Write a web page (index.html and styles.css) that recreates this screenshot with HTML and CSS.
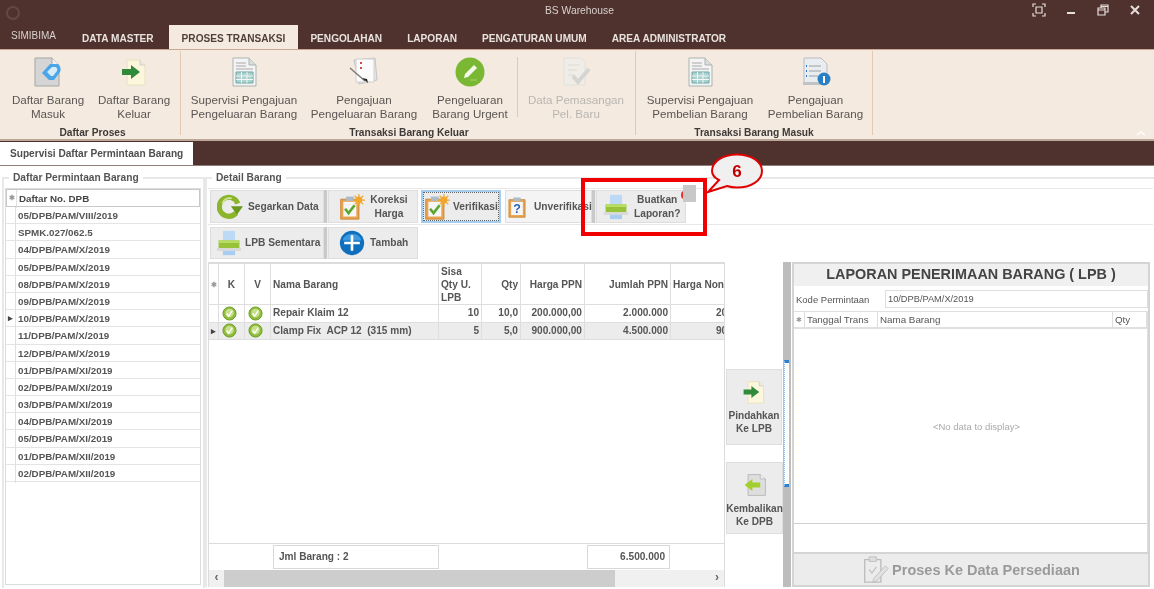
FILE: index.html
```html
<!DOCTYPE html>
<html>
<head>
    <meta charset="utf-8">
    <title>BS Warehouse</title>
    <link rel="stylesheet" href="styles.css">
</head>
<body>

<!-- gambar ikon, dipakai ulang dengan <use> -->
<svg class="defs" width="0" height="0">
    <symbol id="i-doc-blue" viewBox="0 0 30 30">
        <path d="M2 1h17l7 7v21H2z" fill="#d5d5d5" stroke="#a5a5a5"/>
        <path d="M19 1v7h7" fill="#f2f2f2" stroke="#a5a5a5"/>
        <path d="M9 16l8-9 8 0q4 4 2 8l-6 8h-5z" fill="#4aa6e8"/>
        <path d="M14 15l5-5h4q2 2 1 4l-4 5h-2z" fill="#d7ecfb"/>
    </symbol>
    <symbol id="i-doc-right" viewBox="0 0 30 30">
        <path d="M8 3h13l5 5v20H8z" fill="#fbf6dc" stroke="#e8e2c0"/>
        <path d="M21 3v5h5" fill="#e9e9e0" stroke="#cfcfc4"/>
        <path d="M3 12h9V8l9 7-9 7v-4H3z" fill="#2f8a3c"/>
    </symbol>
    <symbol id="i-doc-left" viewBox="0 0 30 30">
        <path d="M7 3h14l6 5v19H7z" fill="#dedede" stroke="#b5b5b5"/>
        <path d="M21 3v5h6" fill="#f2f2f2" stroke="#b5b5b5"/>
        <path d="M21 12h-9V8l-9 7 9 7v-4h9z" fill="#a3cf2d"/>
    </symbol>
    <symbol id="i-sheet" viewBox="0 0 30 30">
        <path d="M4 1h16l7 7v21H4z" fill="#f4f4f4" stroke="#a9b4b4"/>
        <path d="M20 1v7h7" fill="#dcdcdc" stroke="#a9b4b4"/>
        <path d="M7 6h10M7 9h10M7 12h17" stroke="#a8a8a8"/>
        <path d="M7 15h17v11H7z" fill="#a9d3cf" stroke="#6fa5a5"/>
        <path d="M7 19h17M7 22.500h17M12.500 15v11M18 15v11" stroke="#f4f4f4"/>
    </symbol>
    <symbol id="i-notes" viewBox="0 0 30 30">
        <path d="M5 3l21-2 2 22-18 4z" fill="#e4e4e4" stroke="#c5c5c5"/>
        <path d="M7 2h18v23H7z" fill="#fbfbfb" stroke="#d0d0d0"/>
        <path d="M1 11l15 13" stroke="#7c7c7c" stroke-width="1.500"/>
        <path d="M13 21l6 5-1-4z" fill="#222"/>
        <path d="M11 6h2M11 11h2" stroke="#d04a4a" stroke-width="2"/>
    </symbol>
    <symbol id="i-pencil-ok" viewBox="0 0 30 30">
        <circle cx="15" cy="15" r="14.500" fill="#7ab834"/>
        <path d="M9 21l1-4 9-9 3 3-9 9z" fill="#f4f8ea"/>
        <path d="M15 23h7" stroke="#a7d36d"/>
    </symbol>
    <symbol id="i-doc-check" viewBox="0 0 30 30">
        <path d="M3 1h17l4 4v23H3z" fill="#f0ede8" stroke="#e3e0da"/>
        <path d="M7 8h12M7 13h9M7 18h6" stroke="#dedbd5"/>
        <path d="M12 19l5 6 11-13" fill="none" stroke="#d5d4d0" stroke-width="4"/>
    </symbol>
    <symbol id="i-doc-info" viewBox="0 0 30 30">
        <path d="M3 1h17l6 6v20H3z" fill="#e9edf0" stroke="#b8bcc0"/>
        <path d="M8 9h12M8 14h12M8 19h9" stroke="#9aa0a5"/>
        <path d="M5 9h1M5 14h1M5 19h1" stroke="#2d78c8" stroke-width="2"/>
        <path d="M2 25h18v3H2z" fill="#bfc3c5"/>
        <circle cx="23" cy="22" r="6.500" fill="#2b80c5"/>
        <path d="M23 19v7" stroke="#fff" stroke-width="2"/>
    </symbol>
    <symbol id="i-refresh" viewBox="0 0 30 30">
        <path d="M22 22A11 11 0 1 1 24 11" fill="none" stroke="#8cb52c" stroke-width="6"/>
        <path d="M6 11a9 9 0 0 1 11-6" fill="none" stroke="#cfe59a" stroke-width="2"/>
        <path d="M16 14h14l-7 10z" fill="#699a1e"/>
    </symbol>
    <symbol id="i-clip-star" viewBox="0 0 30 30">
        <path d="M2 6h21v23H2z" fill="#e9a34e" stroke="#c67f2c"/>
        <path d="M5 9h15v17H5z" fill="#f6f6f6"/>
        <path d="M8 3h9v5H8z" fill="#aebac8"/>
        <path d="M7 17l4 5 7-9" fill="none" stroke="#5aa82f" stroke-width="3"/>
        <circle cx="23" cy="7" r="4" fill="#f0a72d"/>
        <path d="M23 0v14M16 7h14M18 2l10 10M28 2L18 12" stroke="#f0a72d" stroke-width="1.400"/>
    </symbol>
    <symbol id="i-clip-help" viewBox="0 0 30 30">
        <path d="M4 5h22v24H4z" fill="#e9a34e" stroke="#c67f2c"/>
        <path d="M7 8h16v18H7z" fill="#f6f6f6"/>
        <path d="M10 2h10v5H10z" fill="#aebac8"/>
        <text class="help-mark" x="15" y="23" text-anchor="middle">?</text>
    </symbol>
    <symbol id="i-printer" viewBox="0 0 30 30">
        <path d="M8 1h14v11H8z" fill="#bcd9f5"/>
        <path d="M3 12h24v9H3z" fill="#97c23a"/>
        <path d="M3 12h24v3H3z" fill="#b9dc63"/>
        <path d="M1 21h28v3H1z" fill="#d8d8d8"/>
        <path d="M8 24h14v5H8z" fill="#a8cdf2"/>
    </symbol>
    <symbol id="i-plus" viewBox="0 0 30 30">
        <circle cx="15" cy="15" r="14" fill="#0f6fbd"/>
        <path d="M4 12a11.500 11 0 0 1 22 0z" fill="#3c9ae0"/>
        <path d="M15 6v18M6 15h18" stroke="#fff" stroke-width="3"/>
    </symbol>
    <symbol id="i-ok" viewBox="0 0 16 16">
        <circle cx="8" cy="8" r="7" fill="#8fbd3c" stroke="#6d9a28"/>
        <circle cx="8" cy="7.500" r="4.500" fill="#c8e08e"/>
        <path d="M5 8l2 3 4-6" fill="none" stroke="#fff" stroke-width="1.500"/>
    </symbol>
    <symbol id="i-clip-gray" viewBox="0 0 30 30">
        <path d="M3 4h18v25H3z" fill="#ececec" stroke="#bdbdbd" stroke-width="1.500"/>
        <path d="M8 1h8v5H8z" fill="#dedede" stroke="#bdbdbd"/>
        <path d="M8 15l3 4 5-7" fill="none" stroke="#c4c4c4" stroke-width="1.500"/>
        <path d="M13 25l13-14 3 3-13 14-4 1z" fill="#e2e2e2" stroke="#bdbdbd"/>
    </symbol>
</svg>

<div class="app">
    <div class="titlebar">
        <span class="app-logo"></span>
        <span class="app-title">BS Warehouse</span>
        <div class="win-btns">
            <svg viewBox="0 0 14 14"><path d="M1 4V1h3M10 1h3v3M13 10v3h-3M4 13H1v-3M4 4h6v6H4z"/></svg>
            <svg viewBox="0 0 14 14"><path class="thick" d="M3 10h8"/></svg>
            <svg viewBox="0 0 14 14"><path d="M2 5h7v7H2zM5 5V2h7v7H9M2 7h7M5 3.500h7"/></svg>
            <svg viewBox="0 0 14 14"><path class="thick" d="M3 3l8 8M11 3l-8 8"/></svg>
        </div>
    </div>

    <div class="menubar">
        <span class="menu first">SIMIBIMA</span>
        <span class="menu">DATA MASTER</span>
        <span class="menu active">PROSES TRANSAKSI</span>
        <span class="menu">PENGOLAHAN</span>
        <span class="menu">LAPORAN</span>
        <span class="menu">PENGATURAN UMUM</span>
        <span class="menu">AREA ADMINISTRATOR</span>
    </div>

    <div class="ribbon">
        <div class="rgroup g-proses">
            <div class="ritems">
                <div class="ritem w86"><svg><use href="#i-doc-blue"/></svg><span>Daftar Barang<br>Masuk</span></div>
                <div class="ritem w86"><svg><use href="#i-doc-right"/></svg><span>Daftar Barang<br>Keluar</span></div>
            </div>
            <div class="rlabel">Daftar Proses</div>
        </div>
        <div class="rgroup g-keluar">
            <div class="ritems">
                <div class="ritem w122"><svg><use href="#i-sheet"/></svg><span>Supervisi Pengajuan<br>Pengeluaran Barang</span></div>
                <div class="ritem w118"><svg><use href="#i-notes"/></svg><span>Pengajuan<br>Pengeluaran Barang</span></div>
                <div class="ritem w94"><svg><use href="#i-pencil-ok"/></svg><span>Pengeluaran<br>Barang Urgent</span></div>
                <div class="rsep"></div>
                <div class="ritem w116 disabled"><svg><use href="#i-doc-check"/></svg><span>Data Pemasangan<br>Pel. Baru</span></div>
            </div>
            <div class="rlabel">Transaksi Barang Keluar</div>
        </div>
        <div class="rgroup g-masuk">
            <div class="ritems">
                <div class="ritem w128"><svg><use href="#i-sheet"/></svg><span>Supervisi Pengajuan<br>Pembelian Barang</span></div>
                <div class="ritem w103"><svg><use href="#i-doc-info"/></svg><span>Pengajuan<br>Pembelian Barang</span></div>
            </div>
            <div class="rlabel">Transaksi Barang Masuk</div>
        </div>
        <svg class="collapse" viewBox="0 0 10 6"><path d="M1 5l4-3 4 3"/></svg>
    </div>

    <div class="tabstrip">
        <div class="doc-tab">Supervisi Daftar Permintaan Barang</div>
    </div>

    <div class="main">
        <fieldset class="group left">
            <legend>Daftar Permintaan Barang</legend>
            <div class="dpb">
                <div class="dpb-row head"><span class="ind">&#10033;</span><span>Daftar No. DPB</span></div>
                <div class="dpb-row"><span class="ind"></span><span>05/DPB/PAM/VIII/2019</span></div>
                <div class="dpb-row"><span class="ind"></span><span>SPMK.027/062.5</span></div>
                <div class="dpb-row"><span class="ind"></span><span>04/DPB/PAM/X/2019</span></div>
                <div class="dpb-row"><span class="ind"></span><span>05/DPB/PAM/X/2019</span></div>
                <div class="dpb-row"><span class="ind"></span><span>08/DPB/PAM/X/2019</span></div>
                <div class="dpb-row"><span class="ind"></span><span>09/DPB/PAM/X/2019</span></div>
                <div class="dpb-row"><span class="ind mark">&#9656;</span><span>10/DPB/PAM/X/2019</span></div>
                <div class="dpb-row"><span class="ind"></span><span>11/DPB/PAM/X/2019</span></div>
                <div class="dpb-row"><span class="ind"></span><span>12/DPB/PAM/X/2019</span></div>
                <div class="dpb-row"><span class="ind"></span><span>01/DPB/PAM/XI/2019</span></div>
                <div class="dpb-row"><span class="ind"></span><span>02/DPB/PAM/XI/2019</span></div>
                <div class="dpb-row"><span class="ind"></span><span>03/DPB/PAM/XI/2019</span></div>
                <div class="dpb-row"><span class="ind"></span><span>04/DPB/PAM/XI/2019</span></div>
                <div class="dpb-row"><span class="ind"></span><span>05/DPB/PAM/XI/2019</span></div>
                <div class="dpb-row"><span class="ind"></span><span>01/DPB/PAM/XII/2019</span></div>
                <div class="dpb-row"><span class="ind"></span><span>02/DPB/PAM/XII/2019</span></div>
            </div>
        </fieldset>

        <fieldset class="group detail">
            <legend>Detail Barang</legend>

            <div class="toolbar first-bar">
                <div class="btn w114"><svg><use href="#i-refresh"/></svg><span>Segarkan Data</span></div>
                <div class="grip"></div>
                <div class="btn w90 wide"><svg><use href="#i-clip-star"/></svg><span class="center">Koreksi<br>Harga</span></div>
                <div class="btn w80 focus"><svg><use href="#i-clip-star"/></svg><span>Verifikasi</span></div>
                <div class="btn w87 plain"><svg><use href="#i-clip-help"/></svg><span>Unverifikasi</span></div>
                <div class="grip"></div>
                <div class="btn w90 report-make"><svg><use href="#i-printer"/></svg><span class="center">Buatkan<br>Laporan?</span></div>
            </div>
            <div class="toolbar second-bar">
                <div class="btn w114 tight"><svg><use href="#i-printer"/></svg><span>LPB Sementara</span></div>
                <div class="grip"></div>
                <div class="btn w90 wide"><svg><use href="#i-plus"/></svg><span>Tambah</span></div>
            </div>

            <div class="workarea">
                <div class="items">
                    <div class="cols items-head">
                        <span class="cell c star">&#10033;</span>
                        <span class="cell c">K</span>
                        <span class="cell c">V</span>
                        <span class="cell">Nama Barang</span>
                        <span class="cell">Sisa<br>Qty U.<br>LPB</span>
                        <span class="cell r">Qty</span>
                        <span class="cell r">Harga PPN</span>
                        <span class="cell r">Jumlah PPN</span>
                        <span class="cell clip">Harga Non</span>
                    </div>
                    <div class="cols items-row">
                        <span class="cell"></span>
                        <span class="cell c"><svg class="ok"><use href="#i-ok"/></svg></span>
                        <span class="cell c"><svg class="ok"><use href="#i-ok"/></svg></span>
                        <span class="cell">Repair Klaim 12</span>
                        <span class="cell r">10</span>
                        <span class="cell r">10,0</span>
                        <span class="cell r">200.000,00</span>
                        <span class="cell r">2.000.000</span>
                        <span class="cell clip r-clip">200.000,00</span>
                    </div>
                    <div class="cols items-row sel">
                        <span class="cell c mark">&#9656;</span>
                        <span class="cell c"><svg class="ok"><use href="#i-ok"/></svg></span>
                        <span class="cell c"><svg class="ok"><use href="#i-ok"/></svg></span>
                        <span class="cell">Clamp Fix&nbsp; ACP 12&nbsp; (315 mm)</span>
                        <span class="cell r">5</span>
                        <span class="cell r">5,0</span>
                        <span class="cell r">900.000,00</span>
                        <span class="cell r">4.500.000</span>
                        <span class="cell clip r-clip">900.000,00</span>
                    </div>
                    <div class="items-fill"></div>
                    <div class="cols items-foot">
                        <span class="foot-box jml">Jml Barang : 2</span>
                        <span class="foot-box total">6.500.000</span>
                    </div>
                    <div class="hscroll">
                        <span class="arrow">&#8249;</span>
                        <span class="thumb"></span>
                        <span class="arrow">&#8250;</span>
                    </div>
                </div>

                <div class="movers">
                    <div class="mover m-in"><svg><use href="#i-doc-right"/></svg><span>Pindahkan<br>Ke LPB</span></div>
                    <div class="mover m-out"><svg><use href="#i-doc-left"/></svg><span>Kembalikan<br>Ke DPB</span></div>
                </div>

                <div class="splitter"><div class="split-grip"></div></div>

                <div class="report">
                    <div class="report-title">LAPORAN PENERIMAAN BARANG ( LPB )</div>
                    <div class="report-code">
                        <span>Kode Permintaan</span>
                        <span class="code-box">10/DPB/PAM/X/2019</span>
                    </div>
                    <div class="report-grid">
                        <div class="report-head">
                            <span class="c star">&#10033;</span>
                            <span>Tanggal Trans</span>
                            <span>Nama Barang</span>
                            <span>Qty</span>
                        </div>
                        <div class="no-data">&lt;No data to display&gt;</div>
                        <div class="report-foot"></div>
                    </div>
                    <div class="report-btn"><svg><use href="#i-clip-gray"/></svg><span>Proses Ke Data Persediaan</span></div>
                </div>
            </div>
        </fieldset>
    </div>

    <!-- tanda anotasi di atas tangkapan layar -->
    <div class="note-box"></div>
    <div class="note-dot"></div>
    <div class="note-patch"></div>
    <svg class="note-bubble" viewBox="0 0 64 50">
        <path d="M31 2.500c14 0 25 7 25 16.500S45 35.500 31 35.500c-4 0-7-.5-10-1.500L2 40l11-12C9 26 6 23 6 19 6 9.500 17 2.500 31 2.500z" fill="#f0f0f0" stroke="#e00000" stroke-width="2"/>
        <text x="31" y="25" text-anchor="middle">6</text>
    </svg>
</div>

</body>
</html>
```

FILE: styles.css
```css
* {
    box-sizing: border-box;
}
html, body {
    margin: 0;
    height: 100%;
    overflow: hidden;
    background: #fff;
}
body {
    font-family: "Liberation Sans", Arial, sans-serif;
    font-size: 11px;
    color: #4a4a4a;
}
.defs {
    position: absolute;
}
.app {
    position: relative;
    width: 1154px;
    height: 589px;
    display: grid;
    grid-template-rows: 25px 24px 92px 25px 1fr;
    filter: blur(0.45px);
}

/* title bar */
.titlebar {
    background: #4f322e;
    display: flex;
    align-items: center;
    position: relative;
}
.app-logo {
    width: 14px;
    height: 14px;
    margin-left: 6px;
    border-radius: 50%;
    border: 2px solid #664840;
}
.app-title {
    position: absolute;
    left: 545px;
    top: 5px;
    color: #d9d2cf;
    font-size: 10.300px;
}
.win-btns {
    margin-left: auto;
    margin-right: 12px;
    display: flex;
    gap: 18px;
    margin-top: -5px;
}
.win-btns svg {
    width: 14px;
    height: 14px;
    fill: none;
    stroke: #e6dedb;
    stroke-width: 1.2;
}
.win-btns .thick {
    stroke-width: 2;
}

/* menu */
.menubar {
    background: #4f322e;
    display: flex;
    align-items: stretch;
}
.menu {
    padding: 2px 12.500px 0;
    display: flex;
    align-items: center;
    color: #e8e2de;
    font-weight: bold;
    font-size: 10.100px;
}
.menu.first {
    padding: 0 13.500px 3px 11px;
    font-weight: normal;
    font-size: 10px;
    color: #d8d2cf;
}
.menu.active {
    margin-left: 3px;
    background: #f5eadf;
    color: #4f3f3a;
}

/* ribbon */
.ribbon {
    background: #f5eadf;
    border-top: 1px solid #c9a893;
    border-bottom: 2px solid #bda797;
    display: flex;
    position: relative;
}
.rgroup {
    display: flex;
    flex-direction: column;
    border-right: 1px solid #e2c9b4;
    margin-top: 1px;
    margin-bottom: 4px;
}
.g-proses {
    width: 181px;
    padding-left: 5px;
}
.g-keluar {
    width: 455px;
    padding-left: 2px;
}
.g-masuk {
    width: 237px;
}
.ritems {
    display: flex;
    flex: 1;
}
.ritem {
    display: flex;
    flex-direction: column;
    align-items: center;
    text-align: center;
    padding-top: 6px;
    font-size: 11.600px;
    line-height: 14px;
    color: #5a5553;
    white-space: nowrap;
}
.ritem svg {
    width: 30px;
    height: 30px;
    margin-bottom: 6px;
}
.ritem.disabled {
    color: #b9b6b2;
}
.w86 { width: 86px; }
.w94 { width: 94px; }
.w103 { width: 103px; }
.w116 { width: 116px; }
.w118 { width: 118px; }
.w122 { width: 122px; }
.w128 { width: 128px; }
.rsep {
    width: 1px;
    height: 60px;
    margin-top: 6px;
    background: #e2c9b4;
}
.rlabel {
    text-align: center;
    font-weight: bold;
    font-size: 10.200px;
    line-height: 13px;
    color: #3e3a38;
    margin-bottom: -4px;
}
.collapse {
    position: absolute;
    right: 8px;
    bottom: 3px;
    width: 10px;
    height: 6px;
    fill: none;
    stroke: #fff;
    stroke-width: 1.5;
}

/* tab bar */
.tabstrip {
    background: #4f322e;
    border-bottom: 1px solid #8f7f7a;
    display: flex;
}
.doc-tab {
    width: 193px;
    margin-top: 1px;
    background: #fff;
    padding-left: 10px;
    font-weight: bold;
    font-size: 10.150px;
    line-height: 24px;
    white-space: nowrap;
    color: #4f4f4f;
}

/* main area */
.main {
    display: grid;
    grid-template-columns: 205px 1fr;
    min-height: 0;
}
.group {
    margin: 6px 0 1px;
    padding: 0;
    border: 0;
    border-top: 2px solid #e8e8e8;
    min-width: 0;
    min-height: 0;
}
.group legend {
    margin-left: 4px;
    padding: 0 4px;
    font-weight: bold;
    font-size: 10.200px;
    color: #555;
    line-height: 12px;
}
.left {
    margin-left: 2px;
    border-left: 2px solid #e8e8e8;
    border-right: 2px solid #e8e8e8;
    padding: 4px 0 0 1px;
}
.detail {
    margin-bottom: 2px;
    padding-left: 1px;
    border-left: 2px solid #e8e8e8;
    display: flex;
    flex-direction: column;
}

/* list DPB */
.dpb {
    width: 196px;
    height: 397px;
    border: 1px solid #dcdcdc;
    font-weight: bold;
    font-size: 9.800px;
}
.dpb-row {
    display: grid;
    grid-template-columns: 10px 1fr;
    height: 17.200px;
    line-height: 18px;
    border-bottom: 1px solid #e4e4e4;
    color: #555;
    white-space: nowrap;
}
.dpb-row span:last-child {
    padding-left: 2px;
}
.dpb-row.head {
    height: 18px;
    border: 1px solid #c8c8c8;
    color: #444;
}
.ind {
    border-right: 1px solid #e0e0e0;
    text-align: center;
    color: #999;
    font-size: 7px;
    line-height: 16px;
}
.mark {
    color: #444;
    font-size: 9px;
}
.star {
    color: #999;
    font-size: 7px;
}

/* toolbar */
.toolbar {
    display: flex;
    align-items: stretch;
    width: 945px;
    padding-left: 2px;
}
.first-bar {
    height: 37px;
    margin-top: 4px;
    padding-top: 1px;
    padding-bottom: 1px;
    border-top: 1px solid #e8e8e8;
    border-bottom: 1px solid #e8e8e8;
}
.second-bar {
    height: 35px;
    padding-top: 2px;
    padding-bottom: 1px;
}
.btn {
    display: flex;
    align-items: center;
    gap: 5px;
    padding-left: 6px;
    background: #ececec;
    border: 1px solid #dedede;
    font-weight: bold;
    font-size: 10.200px;
    line-height: 14px;
    color: #555;
    white-space: nowrap;
    margin-right: 3px;
}
.btn svg {
    flex: none;
    width: 26px;
    height: 26px;
}
.btn .center {
    flex: 1;
    text-align: center;
}
.btn.wide {
    padding-left: 10px;
    padding-right: 9px;
}
.btn.report-make {
    padding-right: 6px;
}
.btn.tight {
    gap: 3px;
    padding-left: 5px;
}
.btn.focus {
    border: 2px solid #a5cdf0;
    outline: 1px dotted #666;
    outline-offset: -3px;
    padding-left: 1px;
    gap: 3px;
}
.btn.plain {
    padding-left: 0;
    gap: 6px;
    margin-right: 0;
    background: #f4f4f4;
}
.btn.plain svg {
    width: 22px;
}
.w114 { width: 114px; margin-right: 0; }
.w90 { width: 90px; }
.w80 { width: 80px; margin-right: 4px; }
.w87 { width: 87px; }
.grip {
    width: 4px;
    background: #c9c9c9;
    border-right: 1px solid #eee;
}

/* tabel barang */
.workarea {
    flex: 1;
    min-height: 0;
    display: grid;
    grid-template-columns: 517px 58px 8px 1fr;
    padding-top: 2px;
}
.items {
    display: flex;
    flex-direction: column;
    border-left: 1px solid #dcdcdc;
    min-height: 0;
    border-right: 1px solid #dcdcdc;
}
.cols {
    display: grid;
    grid-template-columns: 10px 26px 26px 168px 43px 39px 64px 86px 1fr;
    font-weight: bold;
    font-size: 10.100px;
    color: #555;
}
.cell {
    padding: 0 2px;
    border-right: 1px solid #dedede;
    border-bottom: 1px solid #dedede;
    display: flex;
    flex-direction: column;
    justify-content: center;
    white-space: nowrap;
    overflow: hidden;
}
.cell.c {
    align-items: center;
    padding: 0;
}
.cell.r {
    align-items: flex-end;
}
.cell.clip {
    border-right: 0;
}
.r-clip {
    padding-left: 45px;
    padding-right: 0;
    color: #555;
}
.items-head {
    height: 43px;
    line-height: 13px;
    border-top: 2px solid #dcdcdc;
}
.items-row {
    height: 17.500px;
    line-height: 16px;
}
.items-row.sel {
    background: #ececec;
}
.ok {
    width: 15px;
    height: 15px;
    margin-right: 5px;
}
.items-fill {
    flex: 1;
}
.items-foot {
    height: 27px;
    border-top: 1px solid #dcdcdc;
    padding-top: 1px;
}
.foot-box {
    border: 1px solid #d8d8d8;
    height: 24px;
    line-height: 22px;
    padding: 0 4px;
}
.jml {
    grid-column: 4 / 5;
    margin-left: 2px;
    padding-left: 5px;
}
.total {
    grid-column: 8 / 9;
    text-align: right;
    margin-left: 2px;
    margin-right: 1px;
}
.hscroll {
    height: 17px;
    display: grid;
    grid-template-columns: 15px 391px 1fr;
    align-items: stretch;
    background: #f0f0f0;
}
.hscroll .arrow {
    text-align: center;
    font-size: 12px;
    line-height: 15px;
    font-weight: bold;
    color: #666;
}
.hscroll .arrow:last-child {
    text-align: right;
    padding-right: 5px;
}
.thumb {
    background: #cdcdcd;
}

/* tombol tengah */
.movers {
    display: flex;
    flex-direction: column;
    align-items: flex-start;
    padding-left: 1px;
    font-weight: bold;
    font-size: 10.100px;
    line-height: 12.500px;
    color: #555;
}
.mover {
    background: #ececec;
    border: 1px solid #dedede;
    display: flex;
    flex-direction: column;
    align-items: center;
    text-align: center;
    padding-top: 9px;
    white-space: nowrap;
}
.mover svg {
    width: 26px;
    height: 26px;
    margin-bottom: 5px;
}
.m-in {
    width: 56px;
    height: 76px;
    margin-top: 107px;
}
.m-out {
    width: 57px;
    height: 72px;
    margin-top: 17px;
}
.splitter {
    background: #bdbdbd;
    padding-top: 98px;
}
.split-grip {
    width: 5px;
    height: 127px;
    background: #fff;
    border-left: 1px dotted #8ab8e8;
    border-top: 3px solid #2d7fd0;
    border-bottom: 3px solid #2d7fd0;
    margin-left: 1px;
}

/* panel laporan */
.report {
    margin-left: 1px;
    width: 358px;
    display: flex;
    flex-direction: column;
    border: 2px solid #d4d4d4;
}
.report-title {
    height: 22px;
    background: #f0f0f0;
    text-align: center;
    font-weight: bold;
    font-size: 14.400px;
    line-height: 20px;
    color: #444;
}
.report-code {
    display: grid;
    grid-template-columns: 89px 1fr;
    align-items: center;
    height: 25px;
    padding: 4px 0 3px 2px;
    font-size: 9.500px;
    color: #555;
}
.code-box {
    border: 1px solid #dedede;
    height: 18px;
    line-height: 16px;
    padding-left: 2px;
    font-size: 9.250px;
}
.report-grid {
    flex: 1;
    display: flex;
    flex-direction: column;
    font-size: 9.800px;
    min-height: 0;
    border-right: 1px solid #dedede;
}
.report-head {
    display: grid;
    grid-template-columns: 11px 73px 235px 1fr;
    height: 18px;
    line-height: 16px;
    border-top: 1px solid #e0e0e0;
    border-bottom: 2px solid #e0e0e0;
    color: #555;
}
.report-head span {
    border-right: 1px solid #dedede;
    padding-left: 2px;
}
.report-head .c {
    padding: 0;
    text-align: center;
    color: #999;
}
.no-data {
    flex: 1;
    display: flex;
    align-items: center;
    justify-content: center;
    padding-left: 12px;
    color: #aaa;
    font-size: 9.500px;
}
.report-foot {
    height: 29px;
    border-top: 1px solid #d0d0d0;
}
.report-btn {
    height: 33px;
    background: #ececec;
    border-top: 2px solid #d4d4d4;
    display: flex;
    align-items: center;
    justify-content: center;
    gap: 3px;
    font-weight: bold;
    font-size: 14.500px;
    color: #9a9a9a;
}
.report-btn svg {
    width: 27px;
    height: 27px;
}

/* anotasi */
.note-box {
    position: absolute;
    left: 581px;
    top: 178px;
    width: 126px;
    height: 58px;
    border: 4px solid #f00000;
}
.note-dot {
    position: absolute;
    left: 681px;
    top: 191px;
    width: 6px;
    height: 8px;
    border-radius: 50%;
    background: #e83030;
}
.note-patch {
    position: absolute;
    left: 683px;
    top: 185px;
    width: 13px;
    height: 17px;
    background: #c8c8c8;
}
.note-bubble {
    position: absolute;
    left: 706px;
    top: 152px;
    width: 64px;
    height: 50px;
}
.note-bubble text {
    font-family: "Liberation Sans", Arial, sans-serif;
    font-weight: bold;
    font-size: 17px;
    fill: #c00000;
}
.help-mark {
    font-family: "Liberation Sans", Arial, sans-serif;
    font-weight: bold;
    font-size: 17px;
    fill: #2b62b8;
}
```
